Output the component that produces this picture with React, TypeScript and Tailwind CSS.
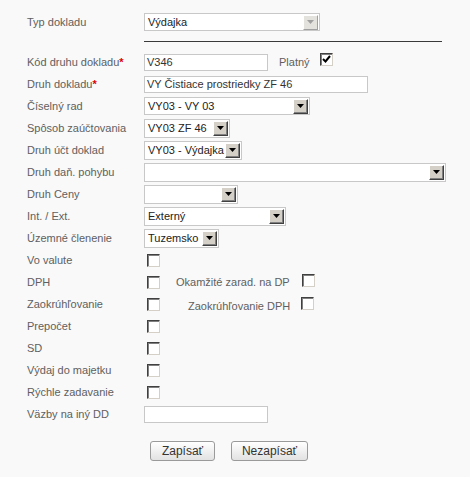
import React from "react";

const font = { fontFamily: '"Liberation Sans", Arial, sans-serif' };

function Arrow({ disabled }: { disabled?: boolean }) {
  return (
    <span
      className={
        "flex h-[15px] w-[15px] items-center justify-center border border-t-white border-l-white " +
        (disabled
          ? "border-b-[#a0a0a0] border-r-[#a0a0a0] bg-[#e4e2dd]"
          : "border-b-[#404040] border-r-[#404040] bg-[#d4d0c8] shadow-[inset_-1px_-1px_0_#808080]")
      }
    >
      <svg width="7" height="4" viewBox="0 0 7 4">
        <path d="M0 0H7L3.5 4Z" fill={disabled ? "#a0a0a0" : "#000"} />
      </svg>
    </span>
  );
}

function Select({ w, value, disabled, h = 19 }: { w: number; value: string; disabled?: boolean; h?: number }) {
  return (
    <div
      className="flex items-center justify-between border border-[#c8c8c8] bg-white pl-[3px] pr-[1px] text-[11px] text-[#222]"
      style={{ width: w, height: h }}
    >
      <span className="whitespace-nowrap leading-none">{value}</span>
      <Arrow disabled={disabled} />
    </div>
  );
}

function Input({ w, value }: { w: number; value?: string }) {
  return (
    <div
      className="flex h-[17px] items-center border border-[#c8c8c8] bg-white pl-[2px] text-[11px] text-[#333]"
      style={{ width: w }}
    >
      <span className="whitespace-nowrap leading-none">{value}</span>
    </div>
  );
}

function Check({ checked }: { checked?: boolean }) {
  return (
    <span className="flex h-[13px] w-[13px] items-center justify-center border border-t-[#404040] border-l-[#404040] border-b-[#d4d0c8] border-r-[#d4d0c8] bg-white shadow-[inset_1px_1px_0_#808080]">
      {checked && (
        <svg width="9" height="9" viewBox="0 0 9 9">
          <path d="M1 4L3.5 6.5L8 1" stroke="#000" strokeWidth="2" fill="none" />
        </svg>
      )}
    </span>
  );
}

function Row({ label, req, children }: { label: string; req?: boolean; children?: React.ReactNode }) {
  return (
    <div className="flex h-[22px] items-center">
      <div className="w-[117px] shrink-0 whitespace-nowrap text-[11px] text-[#606060]">
        {label}
        {req && <span className="font-bold text-[#dd0000]">*</span>}
      </div>
      <div className="flex items-center">{children}</div>
    </div>
  );
}

export default function App() {
  return (
    <div className="h-[477px] w-[470px] bg-[#f9f9f9] pl-[27px] pt-[13px]" style={font}>
      <div className="flex h-[18px] items-center">
        <div className="w-[117px] text-[11px] text-[#606060]">Typ dokladu</div>
        <Select w={176} h={18} value="Výdajka" disabled />
      </div>
      <div className="ml-[117px] mt-[10px] h-px w-[298px] bg-[#3a3a3a]" />
      <div className="mt-[9px] flex flex-col">
        <Row label="Kód druhu dokladu" req>
          <Input w={124} value="V346" />
          <span className="ml-[11px] text-[11px] text-[#606060]">Platný</span>
          <span className="ml-[10px] -mt-[5px]">
            <Check checked />
          </span>
        </Row>
        <Row label="Druh dokladu" req>
          <Input w={224} value="VY Čistiace prostriedky ZF 46" />
        </Row>
        <Row label="Číselný rad">
          <Select w={166} h={18} value="VY03 - VY 03" />
        </Row>
        <Row label="Spôsob zaúčtovania">
          <Select w={86} value="VY03 ZF 46" />
        </Row>
        <Row label="Druh účt doklad">
          <Select w={98} value="VY03 - Výdajka" />
        </Row>
        <Row label="Druh daň. pohybu">
          <Select w={302} value="" />
        </Row>
        <Row label="Druh Ceny">
          <Select w={94} value="" />
        </Row>
        <Row label="Int. / Ext.">
          <Select w={142} value="Externý" />
        </Row>
        <Row label="Územné členenie">
          <Select w={75} value="Tuzemsko" />
        </Row>
        <Row label="Vo valute">
          <span className="ml-[3px]">
            <Check />
          </span>
        </Row>
        <Row label="DPH">
          <span className="ml-[3px]">
            <Check />
          </span>
          <span className="ml-[16px] text-[11px] text-[#606060]">Okamžité zarad. na DP</span>
          <span className="ml-[12px] -mt-[4px]">
            <Check />
          </span>
        </Row>
        <Row label="Zaokrúhľovanie">
          <span className="ml-[3px]">
            <Check />
          </span>
          <span className="ml-[28px] mt-[4px] text-[11px] text-[#606060]">Zaokrúhľovanie DPH</span>
          <span className="ml-[11px] -mt-[2px]">
            <Check />
          </span>
        </Row>
        <Row label="Prepočet">
          <span className="ml-[3px]">
            <Check />
          </span>
        </Row>
        <Row label="SD">
          <span className="ml-[3px]">
            <Check />
          </span>
        </Row>
        <Row label="Výdaj do majetku">
          <span className="ml-[3px]">
            <Check />
          </span>
        </Row>
        <Row label="Rýchle zadavanie">
          <span className="ml-[3px]">
            <Check />
          </span>
        </Row>
        <Row label="Väzby na iný DD">
          <Input w={124} />
        </Row>
      </div>
      <div className="ml-[123px] mt-[16px] flex gap-[16px]">
        <button className="h-[20px] w-[65px] rounded-[3px] border border-[#9a9a9a] bg-gradient-to-b from-white to-[#e2e2e2] text-[12px] text-[#333]">
          Zapísať
        </button>
        <button className="h-[20px] w-[77px] rounded-[3px] border border-[#9a9a9a] bg-gradient-to-b from-white to-[#e2e2e2] text-[12px] text-[#333]">
          Nezapísať
        </button>
      </div>
    </div>
  );
}
